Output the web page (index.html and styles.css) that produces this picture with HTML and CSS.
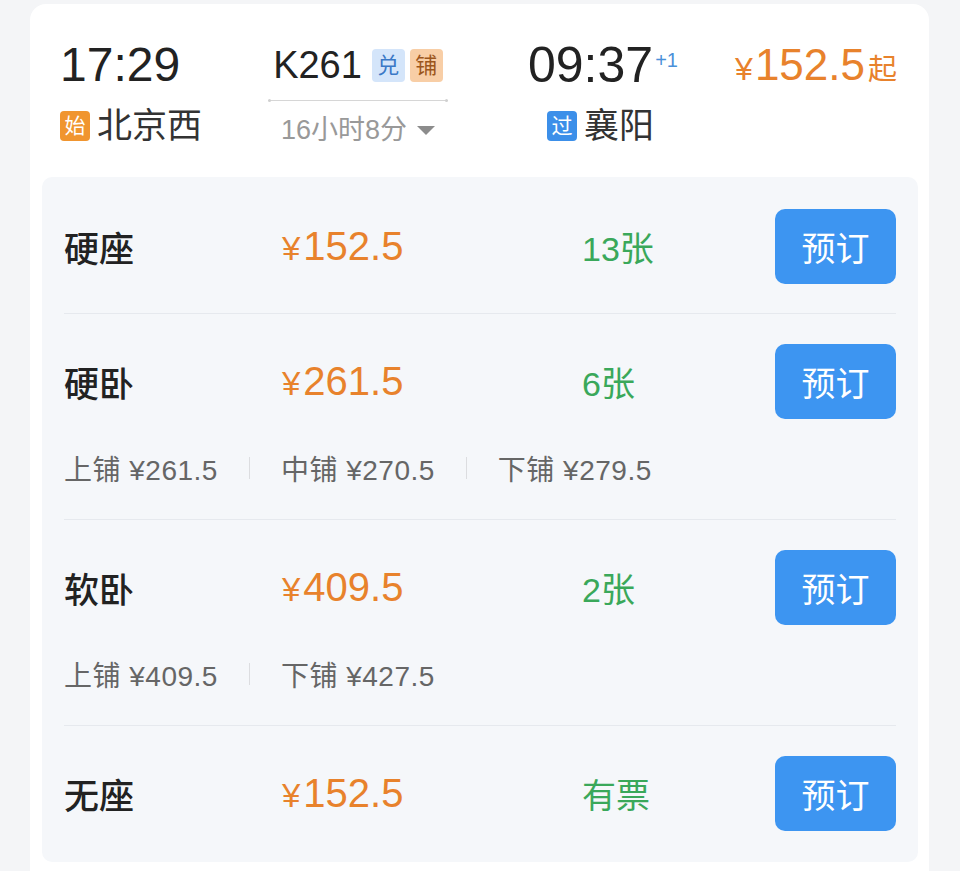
FILE: index.html
```html
<!DOCTYPE html>
<html>
  <head>
    <meta charset="utf-8">
    <title>K261 北京西 - 襄阳</title>
    <link rel="stylesheet" href="styles.css">
  </head>
  <body>
    <div class="card">
      <div class="head">
        <div class="dep">
          <div class="time">17:29</div>
          <div class="station"><span class="tag tag-start">始</span>北京西</div>
        </div>
        <div class="train">
          <div class="train-no">K261<span class="mark mark-dui">兑</span><span class="mark mark-pu">铺</span></div>
          <div class="track"></div>
          <div class="duration">16小时8分<span class="caret"></span></div>
        </div>
        <div class="arr">
          <div class="time time-arr">09:37<span class="plus">+1</span></div>
          <div class="station station-pass"><span class="tag tag-pass">过</span>襄阳</div>
        </div>
        <div class="from-price"><span class="yen">¥</span>152.5<span class="qi">起</span></div>
      </div>

      <div class="seats">
        <div class="seat">
          <div class="seat-main">
            <div class="seat-name">硬座</div>
            <div class="seat-price"><span class="yen">¥</span>152.5</div>
            <div class="seat-left">13张</div>
            <button class="book">预订</button>
          </div>
        </div>
        <div class="seat">
          <div class="seat-main">
            <div class="seat-name">硬卧</div>
            <div class="seat-price"><span class="yen">¥</span>261.5</div>
            <div class="seat-left">6张</div>
            <button class="book">预订</button>
          </div>
          <div class="berths">
            <span>上铺 ¥261.5</span><i class="sep"></i><span>中铺 ¥270.5</span><i class="sep"></i><span>下铺 ¥279.5</span>
          </div>
        </div>
        <div class="seat">
          <div class="seat-main">
            <div class="seat-name">软卧</div>
            <div class="seat-price"><span class="yen">¥</span>409.5</div>
            <div class="seat-left">2张</div>
            <button class="book">预订</button>
          </div>
          <div class="berths">
            <span>上铺 ¥409.5</span><i class="sep"></i><span>下铺 ¥427.5</span>
          </div>
        </div>
        <div class="seat">
          <div class="seat-main">
            <div class="seat-name">无座</div>
            <div class="seat-price"><span class="yen">¥</span>152.5</div>
            <div class="seat-left">有票</div>
            <button class="book">预订</button>
          </div>
        </div>
      </div>
    </div>
  </body>
</html>
```

FILE: styles.css
```css
* {
  box-sizing: border-box;
}
body {
  margin: 0;
  background: #f4f5f7;
  font-family: "Liberation Sans", "Noto Sans CJK SC", sans-serif;
  color: #222;
}
.card {
  margin: 4px 31px 0 30px;
  padding: 0 11px 20px 12px;
  background: #fff;
  border-radius: 16px 16px 0 0;
}

/* header */
.head {
  display: flex;
  height: 173px;
  padding: 37px 21px 0 18px;
}
.time {
  font-size: 48px;
  line-height: 48px;
  color: #222;
}
.time-arr {
  font-size: 50px;
}
.station {
  display: flex;
  align-items: center;
  margin-top: 20px;
  font-size: 35px;
  line-height: 34px;
  color: #333;
}
.tag {
  display: inline-block;
  width: 30px;
  height: 30px;
  margin-right: 7px;
  border-radius: 4px;
  font-size: 21px;
  line-height: 30px;
  text-align: center;
  color: #fff;
}
.tag-start {
  background: #f0952f;
}
.tag-pass {
  background: #3c8fe9;
}
.dep {
  width: 208px;
}
.train {
  width: 180px;
}
.train-no {
  display: flex;
  align-items: center;
  justify-content: center;
  height: 48px;
  font-size: 38px;
  color: #222;
}
.mark {
  width: 33px;
  height: 33px;
  margin-left: 5px;
  border-radius: 4px;
  font-size: 22px;
  line-height: 33px;
  text-align: center;
}
.mark-dui {
  margin-left: 10px;
  background: #d4e5fa;
  color: #3a78c6;
}
.mark-pu {
  background: #f8cea6;
  color: #9c561c;
}
.track {
  position: relative;
  height: 1px;
  margin-top: 11px;
  background: #d6d6d6;
}
.track::before,
.track::after {
  content: "";
  position: absolute;
  top: -1px;
  width: 3px;
  height: 3px;
  border-radius: 50%;
  background: #d0d0d0;
}
.track::before {
  left: 0;
}
.track::after {
  right: 0;
}
.duration {
  display: flex;
  align-items: center;
  justify-content: center;
  margin-top: 12px;
  font-size: 27px;
  line-height: 34px;
  color: #999;
}
.caret {
  width: 0;
  height: 0;
  margin-left: 10px;
  border-left: 9px solid transparent;
  border-right: 9px solid transparent;
  border-top: 9px solid #8c8c8c;
}
.arr {
  flex: 1;
  padding-left: 80px;
}
.plus {
  display: inline-block;
  vertical-align: top;
  margin-top: 9px;
  margin-left: 2px;
  font-size: 20px;
  line-height: 20px;
  color: #4a90d9;
}
.station-pass {
  margin-left: 19px;
}
.from-price {
  font-size: 44px;
  line-height: 48px;
  color: #e8822c;
  white-space: nowrap;
}
.from-price .yen {
  margin-right: 2px;
  font-size: 32px;
}
.qi {
  margin-left: 3px;
  font-size: 29px;
}

/* seat list */
.seats {
  padding: 0 22px;
  background: #f5f7fa;
  border-radius: 10px;
}
.seat {
  padding: 30px 0 29px;
  border-bottom: 1px solid #e6e9ee;
}
.seat:first-child {
  padding-top: 32px;
}
.seat:last-child {
  padding-bottom: 31px;
  border-bottom: 0;
}
.seat-main {
  display: grid;
  grid-template-columns: 218px 300px 1fr 121px;
  align-items: center;
  height: 75px;
}
.seat-name {
  font-size: 35px;
  font-weight: 500;
  color: #222;
}
.seat-price {
  font-size: 40px;
  color: #e8822c;
}
.seat-price .yen {
  margin-right: 3px;
  font-size: 33px;
}
.seat-left {
  font-size: 34px;
  color: #3aa85a;
}
.book {
  width: 121px;
  height: 75px;
  border: 0;
  border-radius: 10px;
  background: #3d95f1;
  color: #fff;
  font-family: inherit;
  font-size: 34px;
}
.berths {
  display: flex;
  align-items: center;
  height: 36px;
  margin-top: 31px;
  margin-bottom: 4px;
  font-size: 28px;
  letter-spacing: 0.5px;
  color: #666;
}
.sep {
  width: 1px;
  height: 22px;
  margin: 0 31px;
  background: #dcdde0;
}
```
